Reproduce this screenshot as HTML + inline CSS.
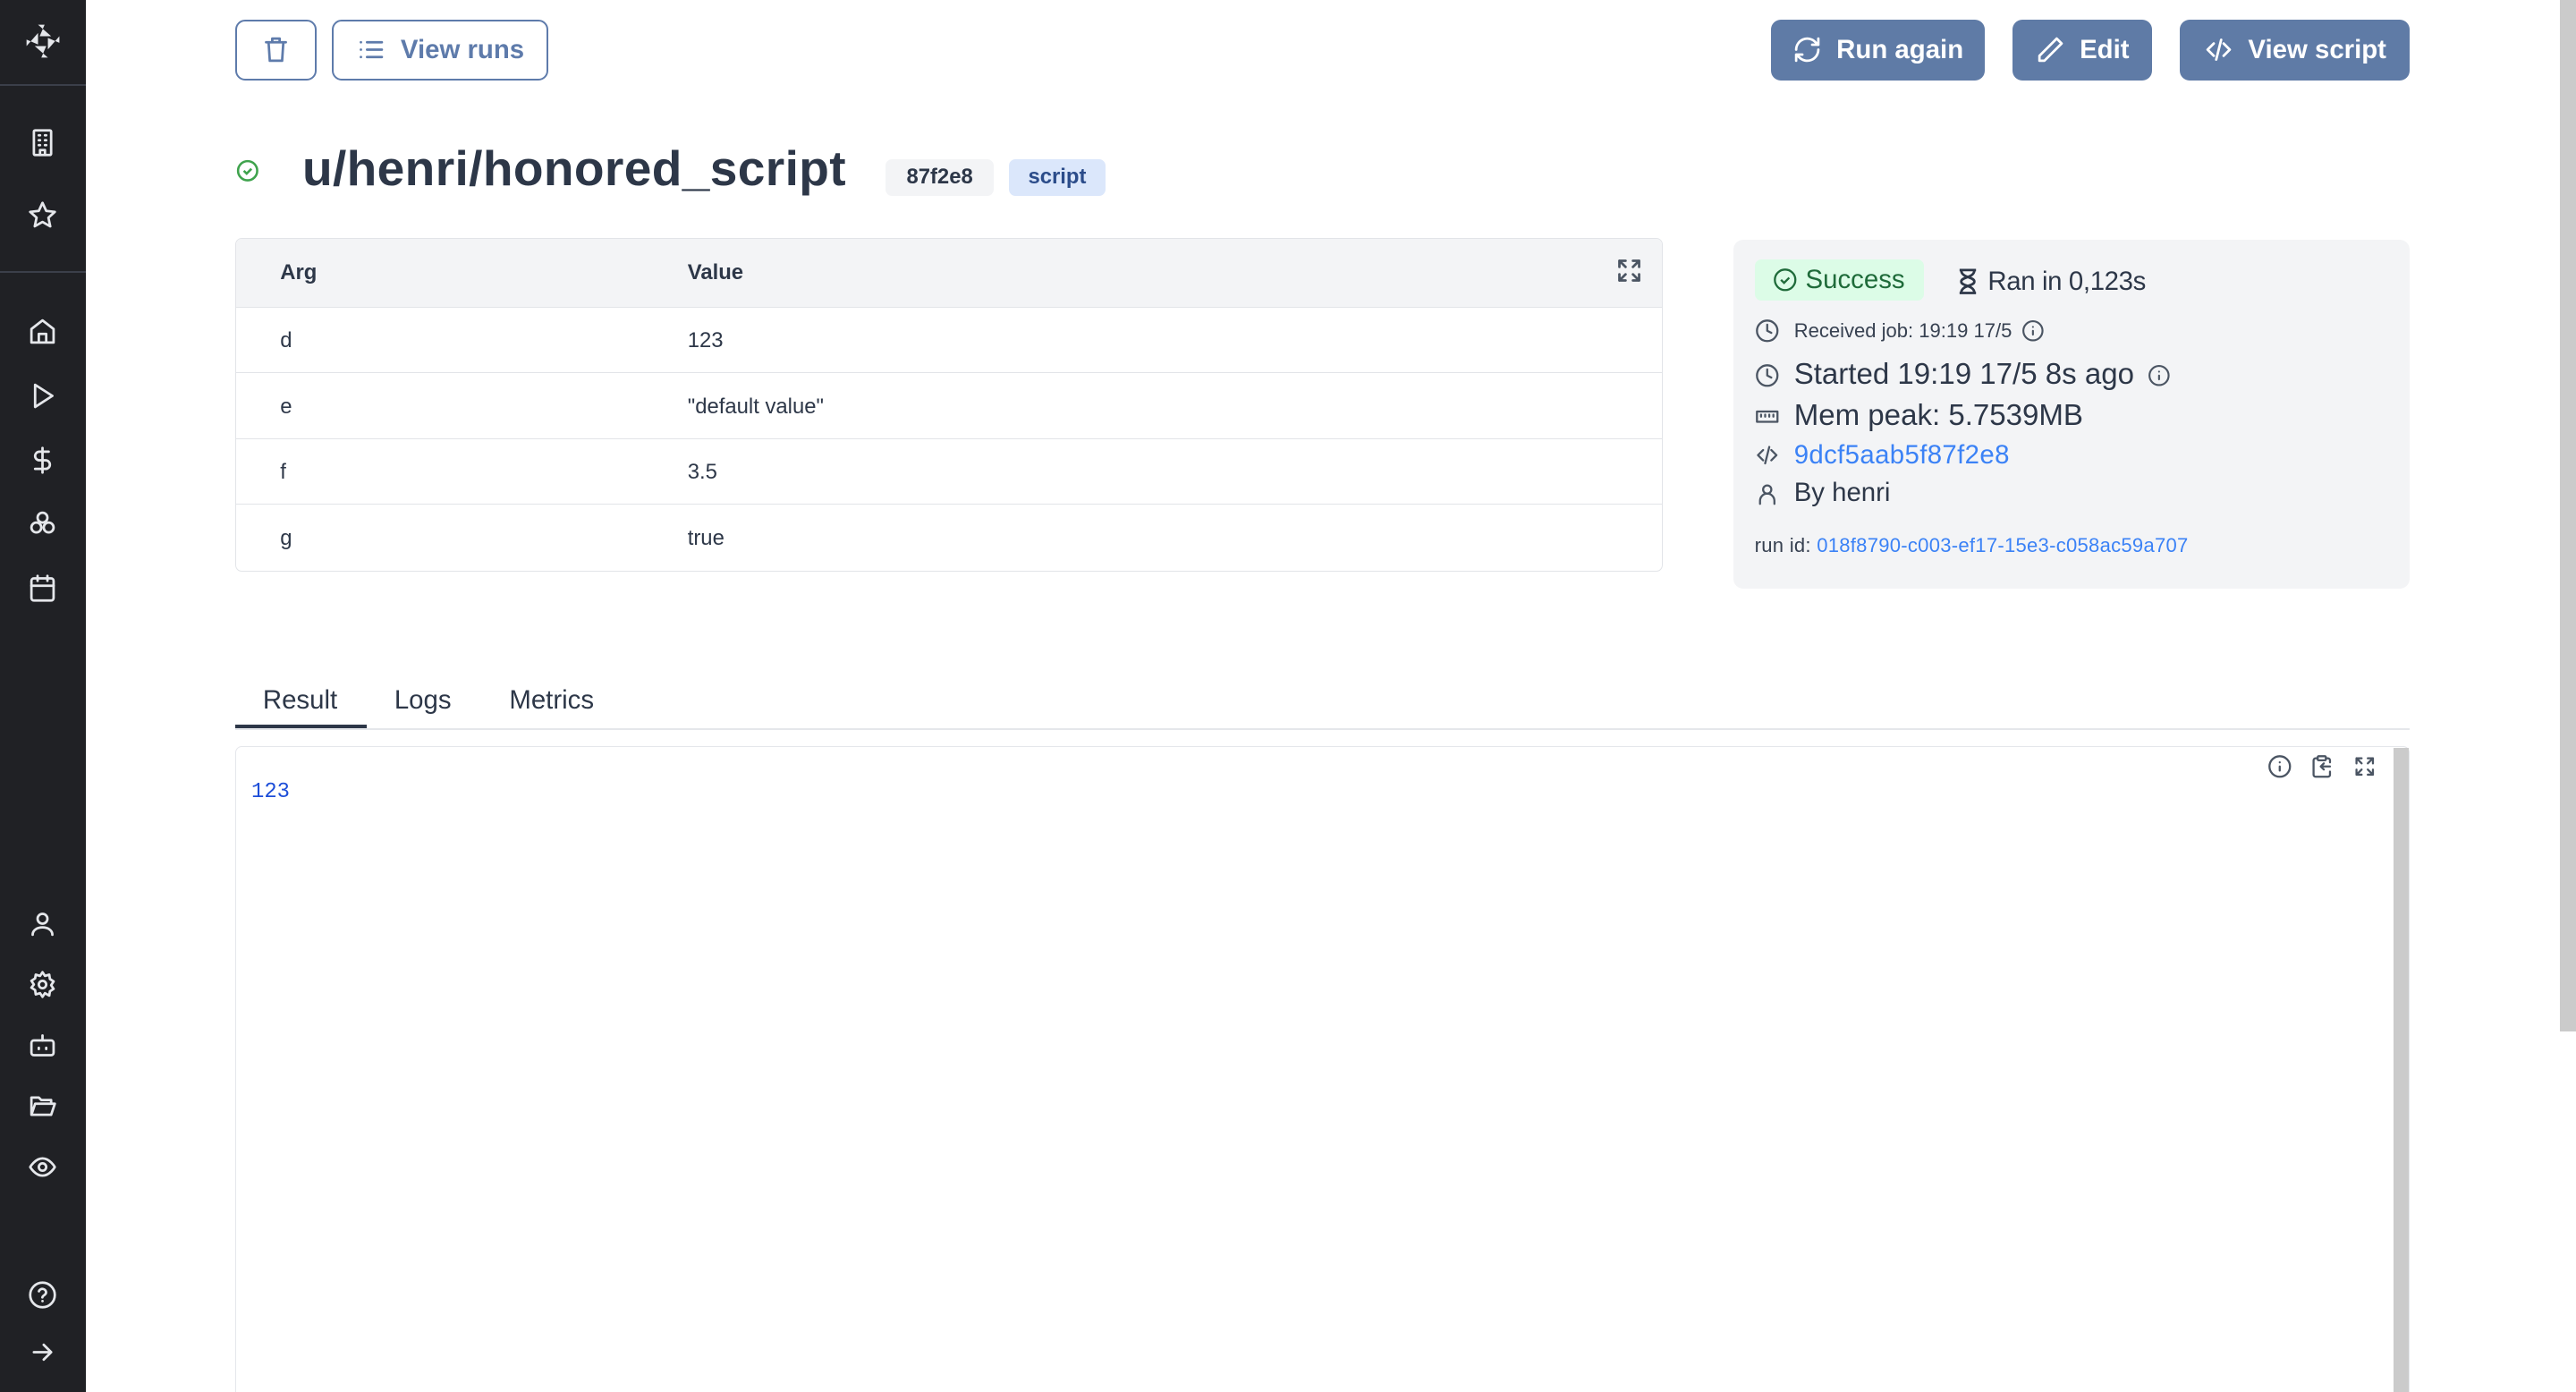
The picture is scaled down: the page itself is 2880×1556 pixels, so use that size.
<!DOCTYPE html>
<html><head><meta charset="utf-8"><style>
*{box-sizing:border-box;margin:0;padding:0}
html,body{width:2880px;height:1556px;overflow:hidden;background:#fff}
#w{width:1568px;height:847px;zoom:1.836735;position:relative;font-family:"Liberation Sans",sans-serif;color:#2d3748}
.sb{position:absolute;left:0;top:0;width:52px;height:847px;background:#202125}
.sb svg{position:absolute;left:17px;width:18px;height:18px;fill:none;stroke:#e5e7eb;stroke-width:2;stroke-linecap:round;stroke-linejoin:round}
.hr{position:absolute;left:0;width:52px;height:1px;background:#3b3f4a}
.btn{position:absolute;top:12px;height:37px;border-radius:6px;display:flex;align-items:center;justify-content:center;font-weight:bold;font-size:16px}
.ob{border:1.5px solid #5e7bab;color:#5e7bab;background:#fff}
.fb{background:#5f7ba6;color:#fff}
.btn svg{width:18px;height:18px;fill:none;stroke:currentColor;stroke-width:2;stroke-linecap:round;stroke-linejoin:round;margin-right:9px}
.tbl{position:absolute;left:143px;top:145px;width:869px;height:203px;border:1px solid #e2e4e8;border-radius:4px;font-size:13px;overflow:hidden}
.row{height:40px;border-top:1px solid #e2e4e8;position:relative}
.row span{position:absolute;top:13px}
.ic{fill:none;stroke:#4b5563;stroke-width:2;stroke-linecap:round;stroke-linejoin:round}
.info{position:absolute;left:1055px;top:146px;width:412px;height:212px;background:#f3f4f6;border-radius:6px}
.info .l{position:absolute;left:13px;display:flex;align-items:center}
.info .l svg{width:15px;height:15px;margin-right:9px}
</style></head><body><div id="w">
<div class="sb">
<svg style="top:13px;width:24px;height:24px;left:14px" viewBox="0 0 24 24"><path d="M9 2h4l-3 7h7zM15 22h-4l3-7H7zM2 15v-4l7 3V7zM22 9v4l-7-3v7z" fill="#e5e7eb" stroke="none"/></svg>
<div class="hr" style="top:51px"></div>
<svg style="top:78px" viewBox="0 0 24 24"><rect x="5" y="2" width="14" height="20" rx="1"/><path d="M9 6h1M14 6h1M9 10h1M14 10h1M9 14h1M14 14h1M10 22v-4h4v4"/></svg>
<svg style="top:122px" viewBox="0 0 24 24"><path d="M12 2l3 6.5 7 .8-5.2 4.8 1.5 7L12 17.5 5.7 21l1.5-7L2 9.3l7-.8z"/></svg>
<div class="hr" style="top:165px"></div>
<svg style="top:193px" viewBox="0 0 24 24"><path d="M3 10l9-7 9 7v11H3zM9 21v-7h6v7"/></svg>
<svg style="top:232px" viewBox="0 0 24 24"><path d="M6 3l14 9-14 9z"/></svg>
<svg style="top:271px" viewBox="0 0 24 24"><path d="M12 2v20M17 5H9.5a3.5 3.5 0 000 7h5a3.5 3.5 0 010 7H6"/></svg>
<svg style="top:310px" viewBox="0 0 24 24"><circle cx="12" cy="7" r="4"/><circle cx="7" cy="15" r="4"/><circle cx="17" cy="15" r="4"/></svg>
<svg style="top:349px" viewBox="0 0 24 24"><rect x="3" y="4" width="18" height="18" rx="2"/><path d="M16 2v4M8 2v4M3 10h18"/></svg>
<svg style="top:553px" viewBox="0 0 24 24"><circle cx="12" cy="8" r="4"/><path d="M4 21c0-4 4-6 8-6s8 2 8 6"/></svg>
<svg style="top:590px" viewBox="0 0 24 24"><circle cx="12" cy="12" r="3"/><path d="M12 2l2 3 3.5-1 .5 3.5 3 2-2 3 2 3-3 2-.5 3.5L14 19l-2 3-2-3-3.5 1L6 16.5l-3-2 2-2.5-2-3 3-2L6.5 4 10 5z"/></svg>
<svg style="top:627px" viewBox="0 0 24 24"><rect x="3" y="8" width="18" height="12" rx="2"/><path d="M12 8V4M9 14v1M15 14v1"/></svg>
<svg style="top:664px" viewBox="0 0 24 24"><path d="M3 19V5h6l2 2h8v3M3 19l3-9h16l-3 9z"/></svg>
<svg style="top:701px" viewBox="0 0 24 24"><path d="M2 12s4-7 10-7 10 7 10 7-4 7-10 7S2 12 2 12z"/><circle cx="12" cy="12" r="3"/></svg>
<svg style="top:779px" viewBox="0 0 24 24"><circle cx="12" cy="12" r="10"/><path d="M9.1 9a3 3 0 015.8 1c0 2-3 2.5-3 4M12 17h.01"/></svg>
<svg style="top:814px" viewBox="0 0 24 24"><path d="M5 12h14M13 6l6 6-6 6"/></svg>
</div>

<div class="btn ob" style="left:143px;width:50px"><svg style="margin:0" viewBox="0 0 24 24"><path d="M4 6h16M9 6V3h6v3M6 6l1 15h10l1-15"/></svg></div>
<div class="btn ob" style="left:202px;width:132px"><svg viewBox="0 0 24 24"><path d="M9 6h12M9 12h12M9 18h12M4 6h.01M4 12h.01M4 18h.01"/></svg>View runs</div>
<div class="btn fb" style="left:1078px;width:130px"><svg viewBox="0 0 24 24"><path d="M21 12a9 9 0 01-15.5 6.2L3 16M3 12a9 9 0 0115.5-6.2L21 8M21 3v5h-5M3 21v-5h5"/></svg>Run again</div>
<div class="btn fb" style="left:1225px;width:85px"><svg viewBox="0 0 24 24"><path d="M17 3l4 4L7 21H3v-4z"/></svg>Edit</div>
<div class="btn fb" style="left:1327px;width:140px"><svg viewBox="0 0 24 24"><path d="M8 7l-5 5 5 5M16 7l5 5-5 5M14 4l-4 16"/></svg>View script</div>

<svg style="position:absolute;left:144px;top:97px;width:14px;height:14px" viewBox="0 0 24 24" fill="none" stroke="#3fa34d" stroke-width="2.4"><circle cx="12" cy="12" r="10"/><path d="M8 12l3 3 5-5"/></svg>
<div style="position:absolute;left:184px;top:85px;font-size:30px;font-weight:bold;color:#2d3748;letter-spacing:0.2px">u/henri/honored_script</div>
<div style="position:absolute;left:539px;top:97px;width:66px;height:22px;background:#f3f4f6;border-radius:4px;font-size:13px;font-weight:bold;text-align:center;line-height:22px">87f2e8</div>
<div style="position:absolute;left:614px;top:97px;width:59px;height:22px;background:#dbe7fb;border-radius:4px;font-size:13px;font-weight:bold;color:#2b4c8a;text-align:center;line-height:22px">script</div>

<div class="tbl">
<div style="height:41px;background:#f3f4f6;position:relative;font-weight:bold"><span style="position:absolute;left:27px;top:13px">Arg</span><span style="position:absolute;left:275px;top:13px">Value</span>
<svg style="position:absolute;left:839px;top:10px;width:18px;height:18px" class="ic" viewBox="0 0 24 24"><path d="M4 9V4h5M4 4l5 5M20 9V4h-5M20 4l-5 5M4 15v5h5M4 20l5-5M20 15v5h-5M20 20l-5-5"/></svg></div>
<div class="row"><span style="left:27px">d</span><span style="left:275px">123</span></div>
<div class="row"><span style="left:27px">e</span><span style="left:275px">"default value"</span></div>
<div class="row"><span style="left:27px">f</span><span style="left:275px">3.5</span></div>
<div class="row"><span style="left:27px">g</span><span style="left:275px">true</span></div>
</div>

<div class="info">
<div style="position:absolute;left:13px;top:12px;width:103px;height:25px;background:#dcfce7;border-radius:4px;color:#1f6b3a;font-size:16px;display:flex;align-items:center;padding-left:11px"><svg style="width:15px;height:15px;margin-right:5px" viewBox="0 0 24 24" fill="none" stroke="#1f6b3a" stroke-width="2"><circle cx="12" cy="12" r="10"/><path d="M8 12l3 3 5-5"/></svg>Success</div>
<div style="position:absolute;left:137px;top:16px;font-size:16px;font-weight:500;display:flex;align-items:center;letter-spacing:-0.2px"><svg style="width:12px;height:16px;margin-right:6px" viewBox="0 0 12 16" fill="none" stroke="#2d3748" stroke-width="1.5"><path d="M1 1h10M1 15h10M2 1c0 5 8 4 8 7s-8 2-8 7M10 1c0 5-8 4-8 7s8 2 8 7"/></svg>Ran in 0,123s</div>
<div class="l" style="top:48px;font-size:12px;color:#374151"><svg class="ic" viewBox="0 0 24 24"><circle cx="12" cy="12" r="10"/><path d="M12 6v6l4 2"/></svg>Received job: 19:19 17/5<svg style="margin-left:6px;width:14px" class="ic" viewBox="0 0 24 24"><circle cx="12" cy="12" r="10"/><path d="M12 16v-4M12 8h.01"/></svg></div>
<div class="l" style="top:72px;font-size:18px"><svg class="ic" viewBox="0 0 24 24"><circle cx="12" cy="12" r="10"/><path d="M12 6v6l4 2"/></svg>Started 19:19 17/5 8s ago<svg style="margin-left:8px;width:14px" class="ic" viewBox="0 0 24 24"><circle cx="12" cy="12" r="10"/><path d="M12 16v-4M12 8h.01"/></svg></div>
<div class="l" style="top:97px;font-size:18px"><svg class="ic" viewBox="0 0 24 24"><rect x="2" y="7" width="20" height="10"/><path d="M6 10v2M10 10v2M14 10v2M18 10v2"/></svg>Mem peak: 5.7539MB</div>
<div class="l" style="top:122px;font-size:16px;color:#3b82f6;letter-spacing:0.2px"><svg class="ic" viewBox="0 0 24 24"><path d="M8 7l-5 5 5 5M16 7l5 5-5 5M14 4l-4 16"/></svg>9dcf5aab5f87f2e8</div>
<div class="l" style="top:145px;font-size:16px"><svg class="ic" viewBox="0 0 24 24"><circle cx="12" cy="8" r="4"/><path d="M5 22v-3a7 7 0 0114 0v3"/></svg>By henri</div>
<div style="position:absolute;left:13px;top:179px;font-size:12px;color:#374151;letter-spacing:0.15px">run id: <span style="color:#3b82f6">018f8790-c003-ef17-15e3-c058ac59a707</span></div>
</div>

<div style="position:absolute;left:143px;top:443px;width:1324px;height:1px;background:#e5e7eb"></div>
<div style="position:absolute;left:143px;top:441px;width:80px;height:2px;background:#2d3748"></div>
<div style="position:absolute;left:160px;top:417px;font-size:16px">Result</div>
<div style="position:absolute;left:240px;top:417px;font-size:16px">Logs</div>
<div style="position:absolute;left:310px;top:417px;font-size:16px">Metrics</div>

<div style="position:absolute;left:143px;top:454px;width:1324px;height:400px;border:1px solid #e5e7eb;border-radius:4px"></div>
<div style="position:absolute;left:1457px;top:455px;width:9px;height:400px;background:#cbcbcb"></div>
<div style="position:absolute;left:153px;top:475px;font-family:'Liberation Mono',monospace;font-size:13px;color:#1d4ed8">123</div>
<svg style="position:absolute;left:1380px;top:459px;width:15px;height:15px" class="ic" viewBox="0 0 24 24"><circle cx="12" cy="12" r="10"/><path d="M12 16v-4M12 8h.01"/></svg>
<svg style="position:absolute;left:1406px;top:459px;width:15px;height:15px" class="ic" viewBox="0 0 24 24"><rect x="8" y="2" width="8" height="4" rx="1"/><path d="M16 4h2a2 2 0 012 2v2M20 17v3a2 2 0 01-2 2H6a2 2 0 01-2-2V6a2 2 0 012-2h2M20 12h-9M14 9l-3 3 3 3"/></svg>
<svg style="position:absolute;left:1432px;top:459px;width:15px;height:15px" class="ic" viewBox="0 0 24 24"><path d="M4 9V4h5M4 4l5 5M20 9V4h-5M20 4l-5 5M4 15v5h5M4 20l5-5M20 15v5h-5M20 20l-5-5"/></svg>

<div style="position:absolute;left:1558px;top:0;width:10px;height:628px;background:#cbcbcb"></div>
</div></body></html>
